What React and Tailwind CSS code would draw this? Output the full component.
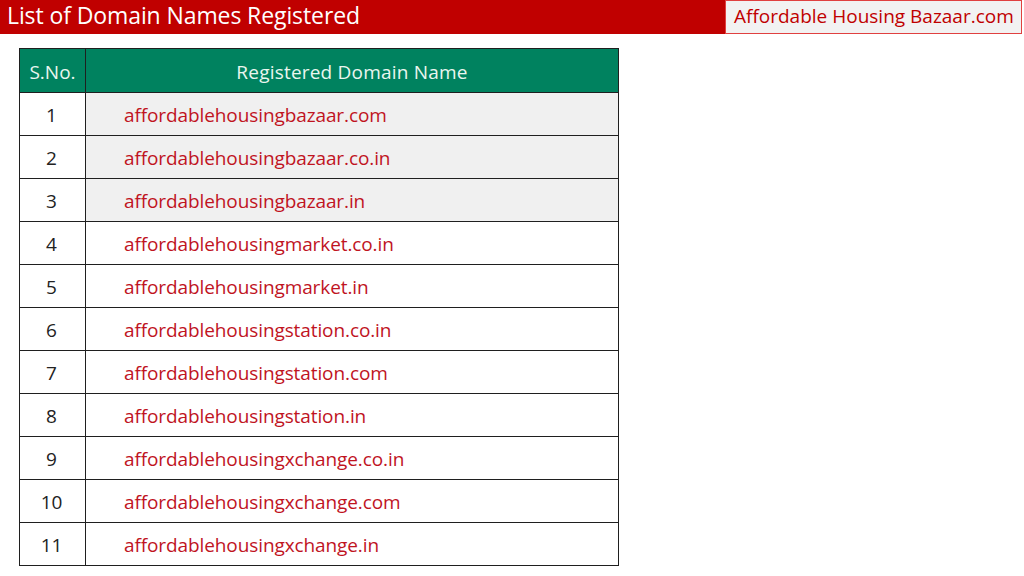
import React from "react";

const domains = [
  "affordablehousingbazaar.com",
  "affordablehousingbazaar.co.in",
  "affordablehousingbazaar.in",
  "affordablehousingmarket.co.in",
  "affordablehousingmarket.in",
  "affordablehousingstation.co.in",
  "affordablehousingstation.com",
  "affordablehousingstation.in",
  "affordablehousingxchange.co.in",
  "affordablehousingxchange.com",
  "affordablehousingxchange.in",
];

export default function App() {
  return (
    <div
      className="w-[1024px] h-[576px] bg-white overflow-hidden"
      style={{ fontFamily: '"Open Sans", "Noto Sans", sans-serif' }}
    >
      <div className="flex h-[34px]">
        <div className="flex-1 bg-[#c00000] text-white text-[23px] leading-[31px] pl-[7px] tracking-[-0.1px]">
          List of Domain Names Registered
        </div>
        <div className="w-[297px] mr-[2px] h-[34px] border border-[#e04040] bg-[#f2f2f2] text-[#c00000] text-[19px] leading-[30px] pl-[8px]">
          Affordable Housing Bazaar.com
        </div>
      </div>
      <table className="ml-[19px] mt-[14px] w-[600px] border-collapse">
        <thead>
          <tr className="h-[44px] bg-[#00825f] text-[#eaf6ef] text-[19px]">
            <th className="w-[66px] border border-[#1f1f1f] font-normal pt-[3px]">S.No.</th>
            <th className="border border-[#1f1f1f] font-normal pt-[3px] tracking-[0.2px]">Registered Domain Name</th>
          </tr>
        </thead>
        <tbody>
          {domains.map((d, i) => (
            <tr key={d} className="h-[43px] text-[19px]">
              <td className="border border-[#1f1f1f] text-center text-[#222] bg-white pt-[2px] pr-[2px]">{i + 1}</td>
              <td
                className={`border border-[#1f1f1f] pl-[38px] pt-[2px] tracking-[-0.1px] text-[#c0141f] ${
                  i < 3 ? "bg-[#f0f0f0]" : "bg-white"
                }`}
              >
                {d}
              </td>
            </tr>
          ))}
        </tbody>
      </table>
    </div>
  );
}
